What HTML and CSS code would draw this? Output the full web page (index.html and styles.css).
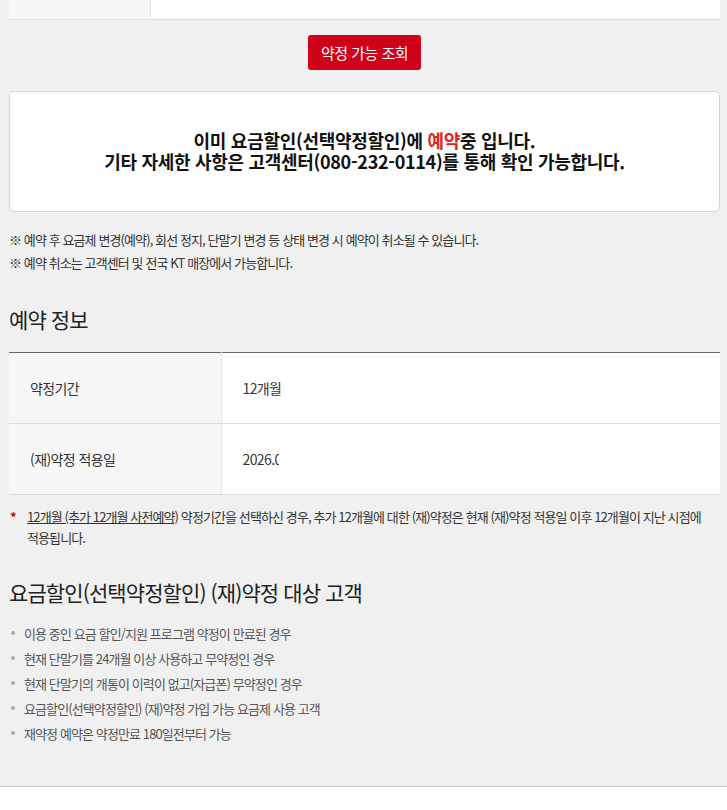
FILE: index.html
```html
<!DOCTYPE html>
<html lang="ko">
<head>
  <meta charset="UTF-8" />
  <meta name="viewport" content="width=device-width, initial-scale=1.0"/>
  <title>요금할인 재약정</title>
  <link rel="stylesheet" href="styles.css">
</head>
<body>

  <div class="page">
    <table class="info-table prev">
      <tr>
        <th></th>
        <td></td>
      </tr>
    </table>

    <div class="btn-row">
      <button class="btn">약정 가능 조회</button>
    </div>

    <div class="notice-box">
      <p>이미 요금할인(선택약정할인)에 <span class="red">예약</span>중 입니다.</p>
      <p>기타 자세한 사항은 고객센터(080-232-0114)를 통해 확인 가능합니다.</p>
    </div>

    <ul class="notes">
      <li>※ 예약 후 요금제 변경(예약), 회선 정지, 단말기 변경 등 상태 변경 시 예약이 취소될 수 있습니다.</li>
      <li>※ 예약 취소는 고객센터 및 전국 KT 매장에서 가능합니다.</li>
    </ul>

    <h2 class="title">예약 정보</h2>

    <table class="info-table">
      <tr>
        <th>약정기간</th>
        <td>12개월</td>
      </tr>
      <tr>
        <th>(재)약정 적용일</th>
        <td><span class="clip">2026.06.15</span></td>
      </tr>
    </table>

    <p class="star-note"><span class="star">*</span><span><u>12개월 (추가 12개월 사전예약)</u> 약정기간을 선택하신 경우, 추가 12개월에 대한 (재)약정은 현재 (재)약정 적용일 이후 12개월이 지난 시점에 적용됩니다.</span></p>

    <h2 class="title">요금할인(선택약정할인) (재)약정 대상 고객</h2>

    <ul class="dot-list">
      <li>이용 중인 요금 할인/지원 프로그램 약정이 만료된 경우</li>
      <li>현재 단말기를 24개월 이상 사용하고 무약정인 경우</li>
      <li>현재 단말기의 개통이 이력이 없고(자급폰) 무약정인 경우</li>
      <li>요금할인(선택약정할인) (재)약정 가입 가능 요금제 사용 고객</li>
      <li>재약정 예약은 약정만료 180일전부터 가능</li>
    </ul>
  </div>

</body>
</html>
```

FILE: styles.css
```css
* { box-sizing: border-box; }
body {
  margin: 0;
  background: #fff;
  font-family: 'Noto Sans CJK KR', 'Noto Sans', sans-serif;
  color: #333;
}
.page {
  background: #f0f0f0;
  border-bottom: 1px solid #ccc;
  padding: 0 7px 40px 9px;
}
ul { list-style: none; margin: 0; padding: 0; }
p { margin: 0; }

.info-table {
  width: 100%;
  border-collapse: collapse;
  border-top: 1px solid #666;
  background: #fff;
}
.info-table th,
.info-table td {
  height: 71px;
  border-bottom: 1px solid #dcdcdc;
  font-size: 14px;
  font-weight: normal;
  text-align: left;
  letter-spacing: -0.6px;
  color: #333;
}
.info-table th {
  width: 212px;
  padding-left: 21px;
  background: #f7f7f7;
  border-right: 1px solid #e6e6e6;
}
.info-table td { padding-left: 21px; }
.info-table.prev { border-top: none; }
.info-table.prev th { width: 141px; }
.info-table.prev th,
.info-table.prev td { height: 19px; padding: 0; }
.clip {
  display: inline-block;
  width: 36px;
  overflow: hidden;
  white-space: nowrap;
  vertical-align: top;
}

.btn-row {
  display: flex;
  justify-content: center;
  margin-top: 15px;
}
.btn {
  height: 35px;
  padding: 0 13px;
  background: #d0021b;
  border: none;
  border-radius: 3px;
  color: #fff;
  font-family: inherit;
  font-size: 15px;
  letter-spacing: -0.5px;
  cursor: pointer;
}

.notice-box {
  margin-top: 21px;
  padding: 38px 20px 39px;
  background: #fff;
  border: 1px solid #d6d6d6;
  border-radius: 5px;
  text-align: center;
  font-size: 18px;
  font-weight: bold;
  line-height: 21px;
  letter-spacing: -0.3px;
  color: #111;
}
.red { color: #e3231c; }

.notes {
  margin-top: 16px;
  font-size: 13px;
  line-height: 23px;
  letter-spacing: -0.9px;
}

.title {
  margin: 30px 0 18px;
  font-size: 21px;
  font-weight: normal;
  line-height: 30px;
  letter-spacing: -0.9px;
  color: #222;
}

.star-note {
  display: flex;
  margin-top: 11px;
  font-size: 13px;
  line-height: 21px;
  letter-spacing: -0.9px;
  word-break: keep-all;
}
.star {
  flex: none;
  width: 18px;
  padding-left: 1px;
  color: #d0021b;
  font-weight: bold;
}
.star-note + .title { margin-top: 29px; }

.dot-list {
  margin-top: -4px;
  font-size: 13px;
  line-height: 25px;
  letter-spacing: -0.9px;
  color: #555;
}
.dot-list li {
  display: flex;
  align-items: center;
}
.dot-list li::before {
  content: "";
  width: 4px;
  height: 4px;
  margin: 0 9px 0 2px;
  border-radius: 50%;
  background: #aaa;
}
```
